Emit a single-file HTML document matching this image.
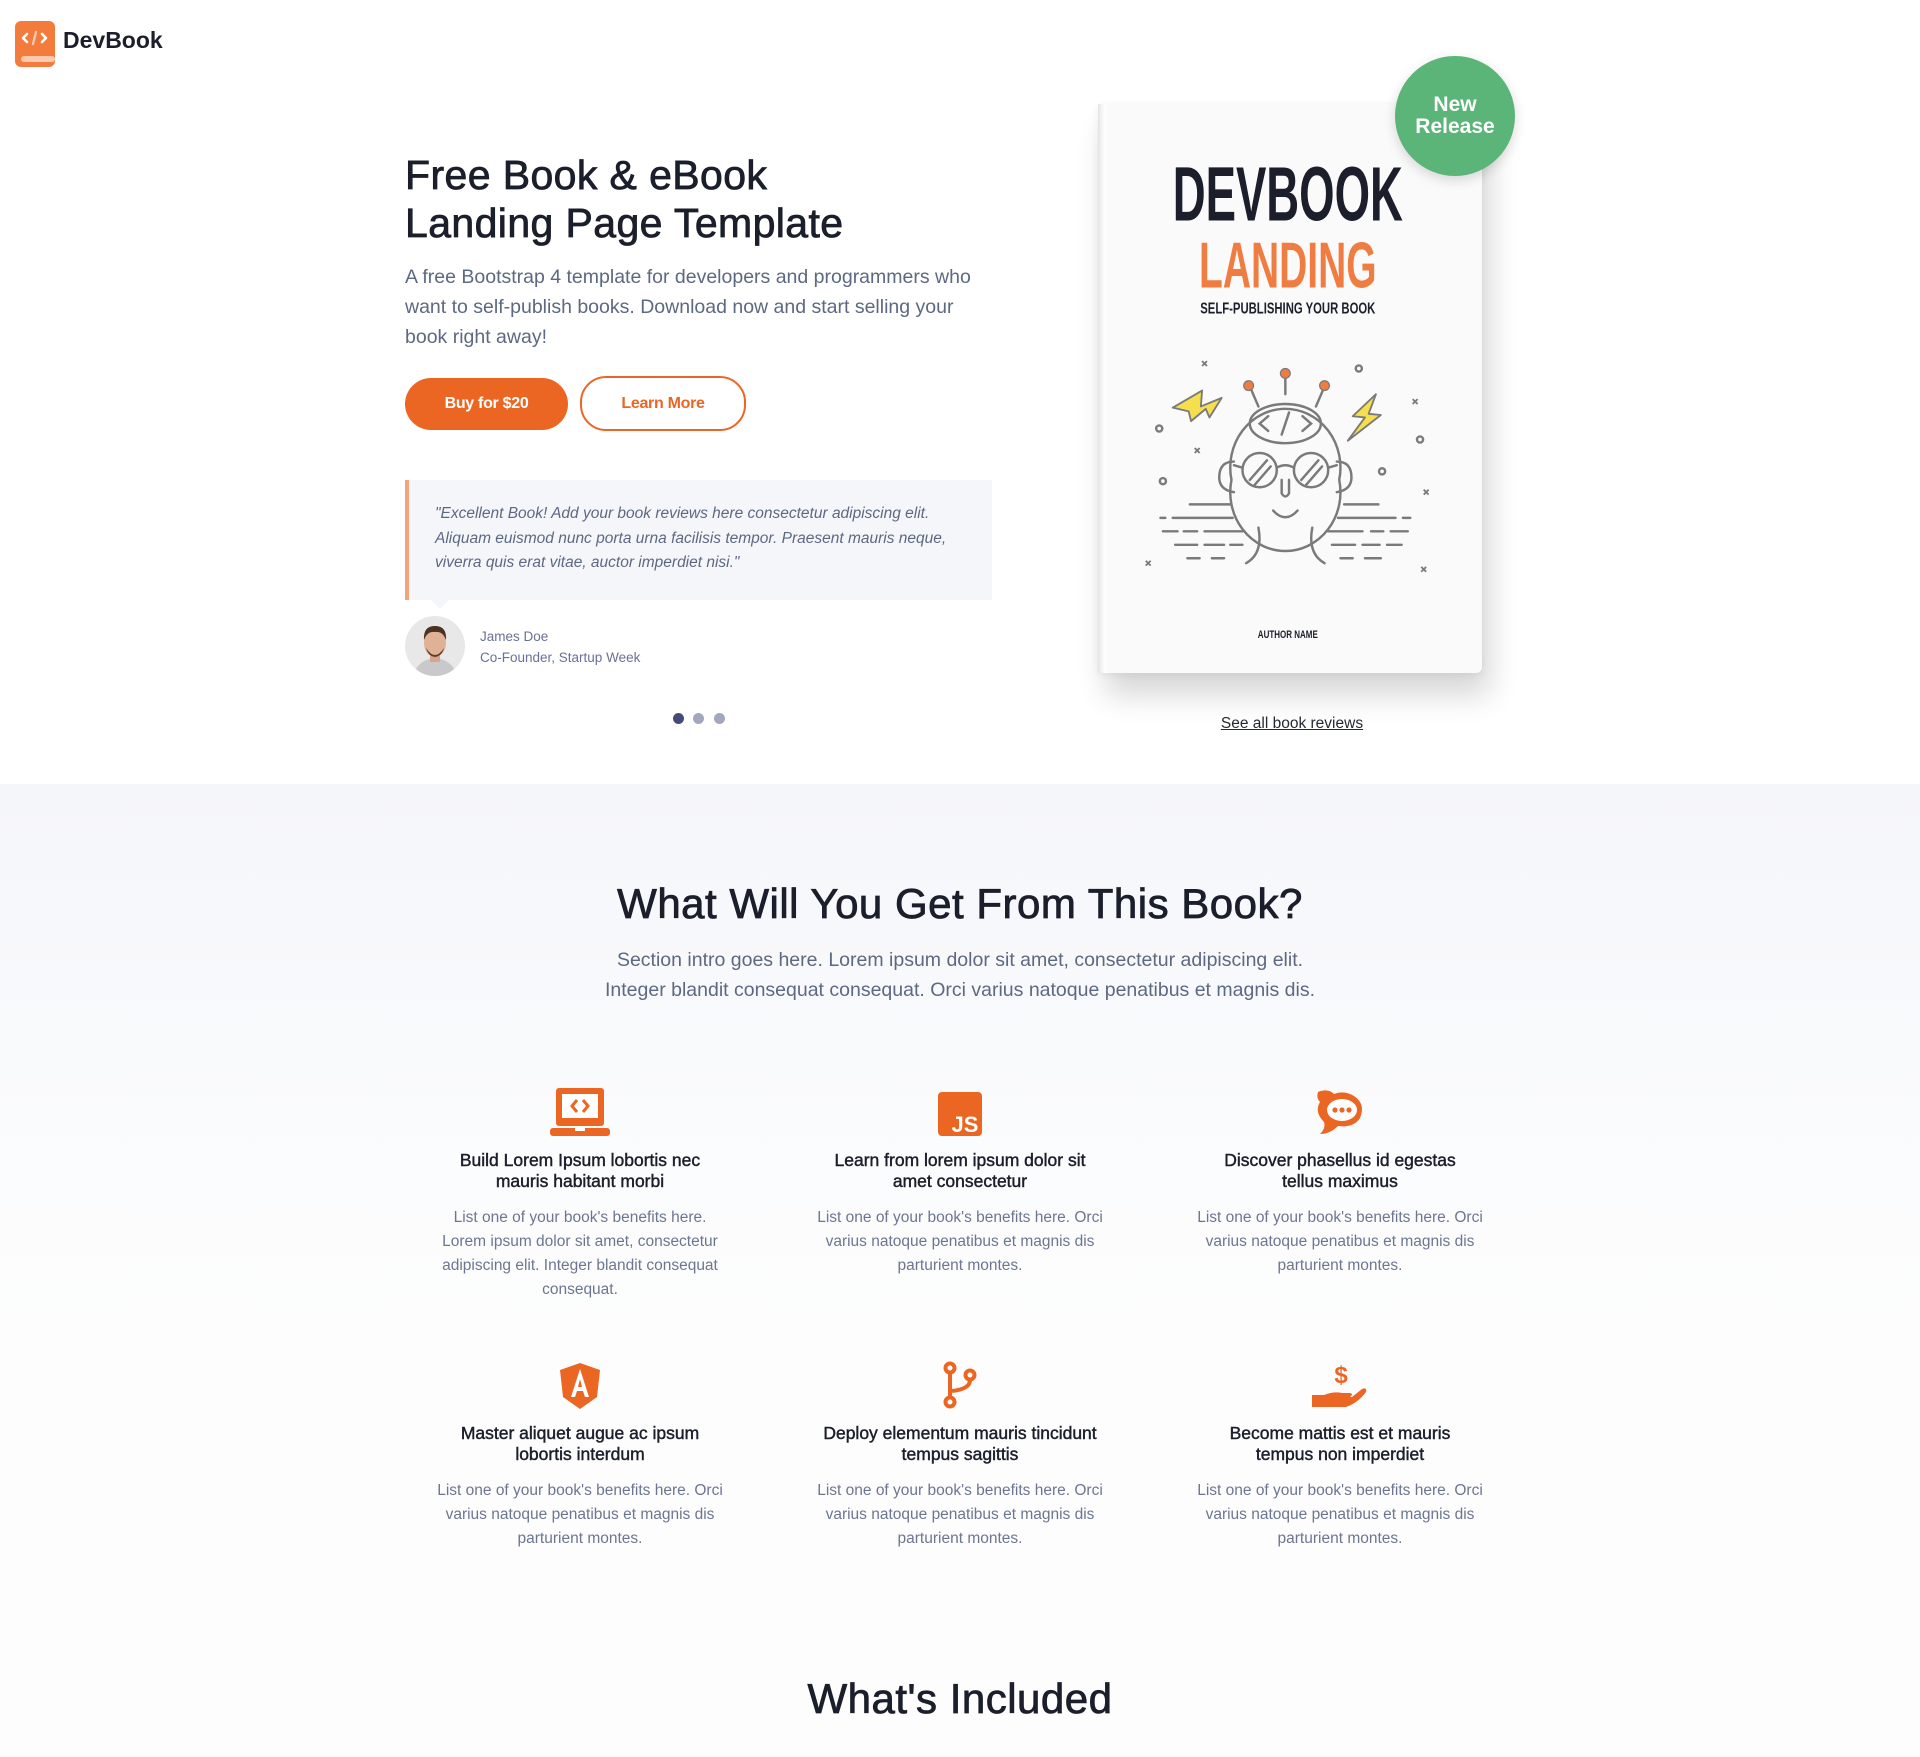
<!DOCTYPE html>
<html><head><meta charset="utf-8"><style>
*{margin:0;padding:0;box-sizing:border-box}
body{width:1920px;height:1757px;position:relative;font-family:"Liberation Sans",sans-serif;background:#fff;overflow:hidden;color:#252930}
.a{position:absolute}
.grad{left:0;top:784px;width:1920px;height:973px;background:linear-gradient(#f5f6fa 0px,#fbfcfd 400px,#fdfdfd 540px,#fdfdfd 973px)}
h1{font-size:41px;font-weight:normal;-webkit-text-stroke:0.8px #1b1f2b;line-height:48px;color:#1b1f2b;letter-spacing:0.4px}
.hd{font-weight:normal;-webkit-text-stroke:0.8px #1b1f2b;letter-spacing:0.5px}
.lead{font-size:19.5px;line-height:30px;color:#5d6881}
.btn{height:52px;border-radius:26px;font-size:16px;font-weight:bold;display:flex;align-items:center;justify-content:center;letter-spacing:-0.3px}
.quote{left:405px;top:480px;width:587px;height:120px;background:#f5f6fa;border-left:4px solid #f4a37b;padding:22px 26px;font-style:italic;font-size:15.5px;line-height:24.5px;color:#5d6881}
.ft{width:300px;text-align:center}
.ft h4{font-size:17.5px;font-weight:normal;-webkit-text-stroke:0.45px #1b1f2b;line-height:21px;color:#1b1f2b;margin:14px 12px 0}
.ft p{font-size:15.5px;line-height:24px;color:#6c7690;margin-top:14px}
.ic{height:48px;display:flex;justify-content:center;align-items:flex-end}
</style></head><body>
<div class="a grad"></div>

<svg class="a" style="left:15px;top:21px" width="41" height="47" viewBox="0 0 41 47">
<rect x="0" y="0" width="40" height="46" rx="6" fill="#f37b3b"/>
<rect x="6" y="35" width="34" height="6" rx="3" fill="#fcc9ae"/>
<path d="M12 13 L8 17 L12 21 M27 13 L31 17 L27 21" stroke="#fff" stroke-width="2.6" fill="none" stroke-linecap="round" stroke-linejoin="round"/>
<path d="M21 11 L18 23" stroke="#fcc9ae" stroke-width="2.4" stroke-linecap="round"/>
</svg>
<div class="a" style="left:63px;top:27px;font-size:23px;font-weight:bold;color:#1b1f2b">DevBook</div>

<h1 class="a" style="left:405px;top:151px">Free Book &amp; eBook<br>Landing Page Template</h1>
<div class="a lead" style="left:405px;top:262px;width:588px">A free Bootstrap 4 template for developers and programmers who want to self-publish books. Download now and start selling your book right away!</div>
<div class="a btn" style="left:405px;top:378px;width:163px;background:#ec6623;color:#fff">Buy for $20</div>
<div class="a btn" style="left:580px;top:376px;width:166px;height:55px;border:2px solid #ec6623;color:#ec6623;background:#fff">Learn More</div>

<div class="a quote">"Excellent Book! Add your book reviews here consectetur adipiscing elit. Aliquam euismod nunc porta urna facilisis tempor. Praesent mauris neque, viverra quis erat vitae, auctor imperdiet nisi."</div>
<div class="a" style="left:431px;top:600px;width:0;height:0;border-left:9px solid transparent;border-right:9px solid transparent;border-top:9px solid #f5f6fa"></div>
<svg class="a" style="left:405px;top:616px" width="60" height="60" viewBox="0 0 60 60">
<defs><clipPath id="cc"><circle cx="30" cy="30" r="30"/></clipPath></defs>
<g clip-path="url(#cc)"><rect width="60" height="60" fill="#e8e8e8"/>
<path d="M8 60 Q12 44 30 42 Q48 44 52 60Z" fill="#c9c9cb"/>
<rect x="25" y="36" width="10" height="10" fill="#d9a58a"/>
<ellipse cx="30" cy="27" rx="11" ry="14" fill="#e0b194"/>
<path d="M19 24 Q18 10 30 10 Q42 10 41 24 Q38 15 30 16 Q22 15 19 24Z" fill="#4a3324"/>
<path d="M21 32 Q30 46 39 32 Q37 40 30 41 Q23 40 21 32Z" fill="#5a3e2d"/></g></svg>
<div class="a" style="left:480px;top:626px;font-size:13.5px;line-height:21px;color:#6a7098">James Doe<br>Co-Founder, Startup Week</div>
<div class="a" style="left:673px;top:713px;width:11px;height:11px;border-radius:50%;background:#454a7a"></div>
<div class="a" style="left:693px;top:713px;width:11px;height:11px;border-radius:50%;background:#a3a6bf"></div>
<div class="a" style="left:714px;top:713px;width:11px;height:11px;border-radius:50%;background:#a3a6bf"></div>

<div class="a" style="left:1098px;top:104px;width:384px;height:569px;background:#fafafa;border-radius:2px 6px 6px 2px;box-shadow:8px 22px 30px rgba(0,0,0,0.16),0 2px 8px rgba(0,0,0,0.06)"></div>
<div class="a" style="left:1098px;top:104px;width:8px;height:569px;background:linear-gradient(90deg,#e4e4e4,#f5f5f5,#fff)"></div>
<svg class="a" style="left:1098px;top:104px" width="384" height="569" viewBox="897 85 313.6 464.7">
<text x="1052" y="180" text-anchor="middle" font-family="Liberation Sans Narrow,Liberation Sans,sans-serif" font-weight="bold" font-size="63" fill="#1c1e2b" textLength="188" lengthAdjust="spacingAndGlyphs">DEVBOOK</text>
<text x="1052" y="235" text-anchor="middle" font-family="Liberation Sans Narrow,Liberation Sans,sans-serif" font-weight="bold" font-size="53" fill="#ef7d41" textLength="145" lengthAdjust="spacingAndGlyphs">LANDING</text>
<text x="1052" y="256" text-anchor="middle" font-family="Liberation Sans Narrow,Liberation Sans,sans-serif" font-weight="bold" font-size="13" fill="#1c1e2b" textLength="143" lengthAdjust="spacingAndGlyphs">SELF-PUBLISHING YOUR BOOK</text>
<text x="1052" y="521" text-anchor="middle" font-family="Liberation Sans Narrow,Liberation Sans,sans-serif" font-weight="bold" font-size="9" fill="#1c1e2b" textLength="49" lengthAdjust="spacingAndGlyphs">AUTHOR NAME</text>
<g fill="none" stroke="#7a7a7a" stroke-width="2" stroke-linecap="round">
<path d="M1022 318 L1028 332 M1050 308 L1050 322 M1081 318 L1075 332"/>
<path d="M1006 392 A45 48 0 1 1 1094 392 A45 48 0 1 1 1006 392"/>
<ellipse cx="1050" cy="346" rx="29" ry="16"/>
<path d="M1036 340 L1029 346 L1036 352 M1064 340 L1071 346 L1064 352 M1053 337 L1047 355"/>
<circle cx="1029" cy="384" r="14"/><circle cx="1071" cy="384" r="14"/>
<path d="M1043 382 Q1050 378 1057 382 M1015 382 L1008 380 M1085 382 L1092 380"/>
<path d="M1021 392 L1035 376 M1025 396 L1038 381 M1063 392 L1077 376 M1067 396 L1080 381"/>
<path d="M1008 377 Q996 377 996 390 Q996 400 1008 402 M1092 377 Q1104 377 1104 390 Q1104 400 1092 402"/>
<path d="M1047 392 L1047 403 Q1050 408 1053 403 L1053 392"/>
<path d="M1040 417 Q1050 428 1060 417"/>
<path d="M1028 431 Q1032 452 1018 460 M1072 431 Q1068 452 1082 460"/>
<path d="M972 412 L1005 412 M948 423 L952 423 M958 423 L1007 423 M950 434 L962 434 M967 434 L978 434 M984 434 L1015 434 M960 445 L978 445 M984 445 L1000 445 M1005 445 L1015 445 M970 456 L980 456 M990 456 L1000 456"/>
<path d="M1098 412 L1126 412 M1093 423 L1140 423 M1146 423 L1152 423 M1085 434 L1113 434 M1120 434 L1130 434 M1136 434 L1150 434 M1088 445 L1107 445 M1113 445 L1127 445 M1133 445 L1145 445 M1095 456 L1105 456 M1115 456 L1128 456"/>
<circle cx="947" cy="350" r="2.5"/><circle cx="950" cy="393" r="2.5"/><circle cx="1110" cy="301" r="2.5"/><circle cx="1160" cy="359" r="2.5"/><circle cx="1129" cy="385" r="2.5"/>
</g>
<g stroke="#7a7a7a" stroke-width="1.5"><path d="M982 295 l4 4 m0 -4 l-4 4 M976 366 l4 4 m0 -4 l-4 4 M1154 326 l4 4 m0 -4 l-4 4 M1163 400 l4 4 m0 -4 l-4 4 M936 458 l4 4 m0 -4 l-4 4 M1161 463 l4 4 m0 -4 l-4 4"/></g>
<g fill="#f5df4d" stroke="#7a7a7a" stroke-width="1.5" stroke-linejoin="round">
<path d="M958 333 L982 319 L981 332 L998 325 L988 341 L985 334 L973 344 L971 336 Z"/>
<path d="M1124 322 L1105 340 L1115 341 L1101 360 L1128 339 L1118 338 Z"/>
</g>
<g fill="#ef7d41" stroke="#7a7a7a" stroke-width="1"><circle cx="1020" cy="315" r="4"/><circle cx="1050" cy="305" r="4"/><circle cx="1082" cy="315" r="4"/></g>
</svg>
<div class="a" style="left:1395px;top:56px;width:120px;height:120px;border-radius:50%;background:#5bb478;box-shadow:0 4px 12px rgba(0,0,0,0.15);color:#fff;font-weight:bold;font-size:21px;line-height:22px;display:flex;align-items:center;justify-content:center;text-align:center">New<br>Release</div>
<div class="a" style="left:1192px;top:715px;width:200px;text-align:center;font-size:15.5px;color:#252930;text-decoration:underline">See all book reviews</div>

<div class="a hd" style="left:0;top:880px;width:1920px;text-align:center;font-size:42px;color:#1b1f2b">What Will You Get From This Book?</div>
<div class="a" style="left:590px;top:945px;width:740px;text-align:center;font-size:19.5px;line-height:30px;color:#5d6881">Section intro goes here. Lorem ipsum dolor sit amet, consectetur adipiscing elit. Integer blandit consequat consequat. Orci varius natoque penatibus et magnis dis.</div>

<div class="a ft" style="left:430px;top:1088px">
<div class="ic"><svg width="60" height="48" viewBox="0 0 60 48"><rect x="6" y="0" width="48" height="38" rx="3" fill="#ec6623"/><rect x="12" y="6" width="36" height="24" fill="#fff"/><path d="M27 12 L22 18 L27 24 M33 12 L38 18 L33 24" stroke="#ec6623" stroke-width="3" fill="none"/><rect x="0" y="40" width="60" height="8" rx="3" fill="#ec6623"/><rect x="25" y="40" width="10" height="3" fill="#fff"/></svg></div>
<h4>Build Lorem Ipsum lobortis nec mauris habitant morbi</h4>
<p>List one of your book's benefits here. Lorem ipsum dolor sit amet, consectetur adipiscing elit. Integer blandit consequat consequat.</p></div>
<div class="a ft" style="left:810px;top:1088px">
<div class="ic"><svg width="44" height="44" viewBox="0 0 44 44"><rect width="44" height="44" rx="4" fill="#ec6623"/><text x="27" y="40" text-anchor="middle" font-family="Liberation Sans Narrow,Liberation Sans,sans-serif" font-weight="bold" font-size="22" fill="#fff">JS</text></svg></div>
<h4>Learn from lorem ipsum dolor sit amet consectetur</h4>
<p>List one of your book's benefits here. Orci varius natoque penatibus et magnis dis parturient montes.</p></div>
<div class="a ft" style="left:1190px;top:1088px">
<div class="ic"><svg width="56" height="48" viewBox="0 0 56 48"><path d="M6 4 Q16 0 22 6 Q32 2 42 8 Q54 16 48 30 Q42 40 26 38 Q18 46 8 46 Q14 40 12 34 Q2 24 8 14 Q4 10 6 4Z" fill="#ec6623"/><ellipse cx="30" cy="22" rx="15" ry="11" fill="#fff"/><circle cx="23" cy="22" r="2.6" fill="#ec6623"/><circle cx="30" cy="22" r="2.6" fill="#ec6623"/><circle cx="37" cy="22" r="2.6" fill="#ec6623"/></svg></div>
<h4>Discover phasellus id egestas tellus maximus</h4>
<p>List one of your book's benefits here. Orci varius natoque penatibus et magnis dis parturient montes.</p></div>

<div class="a ft" style="left:430px;top:1361px">
<div class="ic"><svg width="40" height="46" viewBox="0 0 40 46"><path d="M20 0 L40 7 L37 34 L20 46 L3 34 L0 7Z" fill="#ec6623"/><path d="M20 6 L11 34 H15 L17 28 H23 L25 34 H29 Z M18 24 L20 16 L22 24Z" fill="#fff"/></svg></div>
<h4>Master aliquet augue ac ipsum lobortis interdum</h4>
<p>List one of your book's benefits here. Orci varius natoque penatibus et magnis dis parturient montes.</p></div>
<div class="a ft" style="left:810px;top:1361px">
<div class="ic"><svg width="40" height="48" viewBox="0 0 40 48"><g fill="none" stroke="#ec6623" stroke-width="4"><circle cx="10" cy="7" r="4.5"/><circle cx="10" cy="41" r="4.5"/><circle cx="30" cy="14" r="4.5"/><path d="M10 12 V36 M30 19 Q30 28 12 30"/></g></svg></div>
<h4>Deploy elementum mauris tincidunt tempus sagittis</h4>
<p>List one of your book's benefits here. Orci varius natoque penatibus et magnis dis parturient montes.</p></div>
<div class="a ft" style="left:1190px;top:1361px">
<div class="ic"><svg width="56" height="48" viewBox="0 0 56 48"><text x="29" y="22" text-anchor="middle" font-family="Liberation Sans,sans-serif" font-weight="bold" font-size="24" fill="#ec6623">$</text><path d="M0 34 H12 Q22 30 30 32 H38 Q42 33 38 36 H26 H40 L50 28 Q55 26 54 31 Q46 42 34 46 H0Z" fill="#ec6623"/></svg></div>
<h4>Become mattis est et mauris tempus non imperdiet</h4>
<p>List one of your book's benefits here. Orci varius natoque penatibus et magnis dis parturient montes.</p></div>

<div class="a hd" style="left:0;top:1675px;width:1920px;text-align:center;font-size:42px;color:#1b1f2b">What's Included</div>
</body></html>
